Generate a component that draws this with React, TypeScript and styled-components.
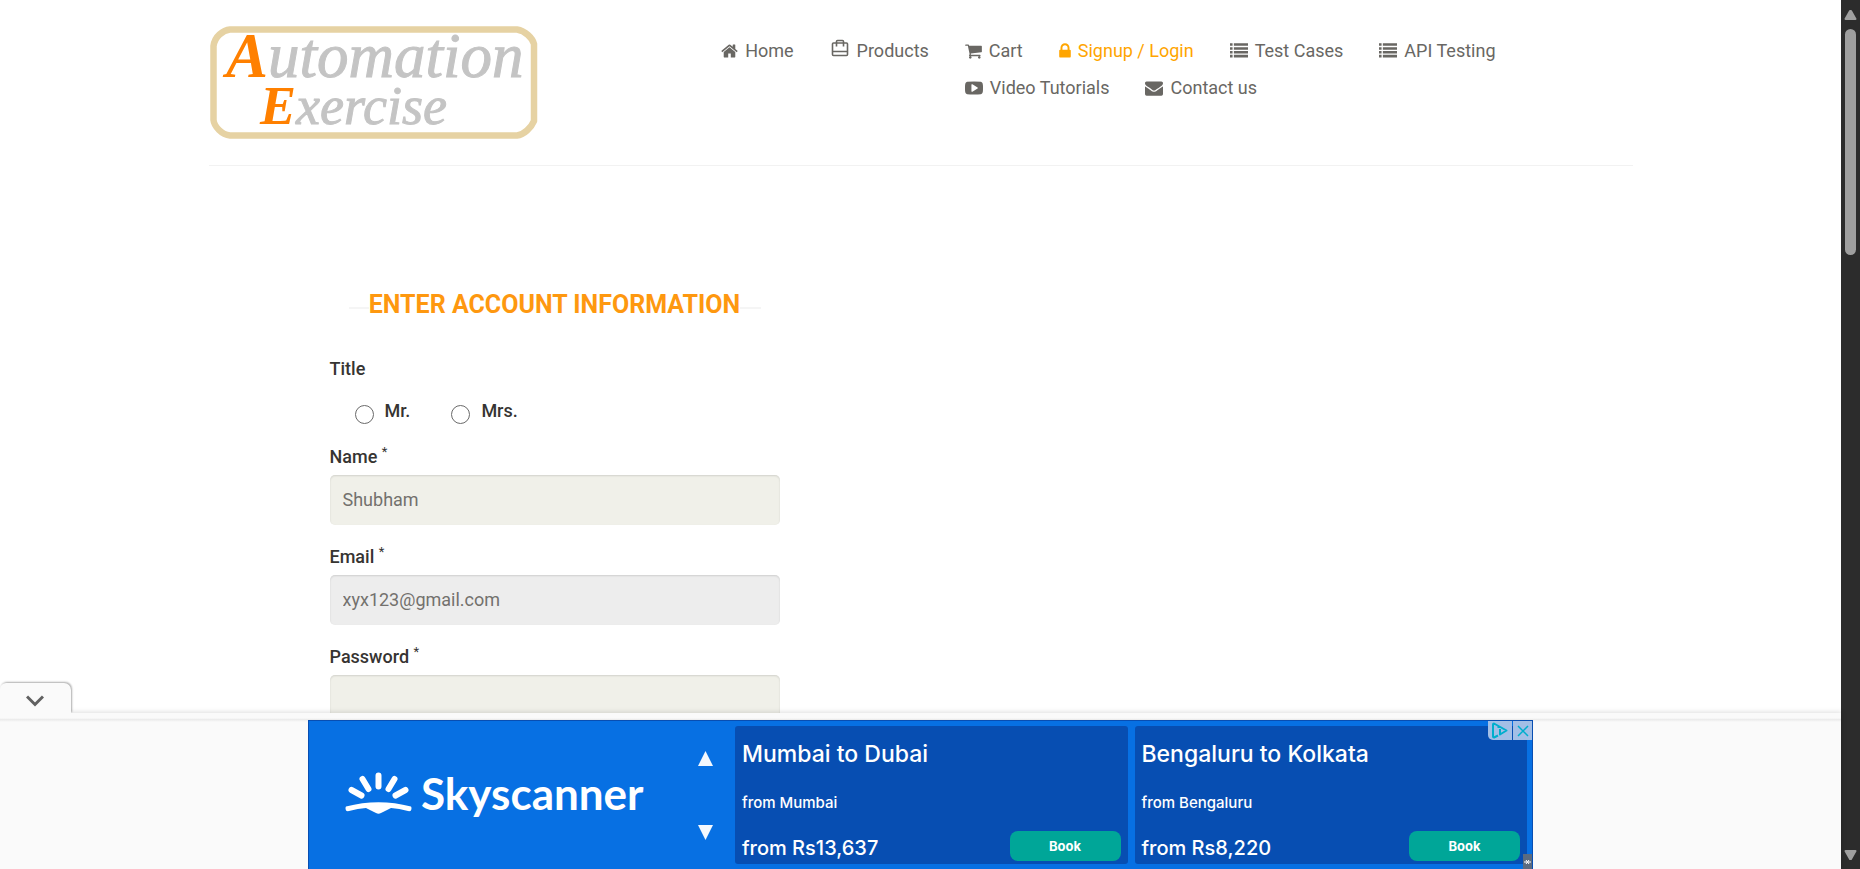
import React from "react";
import styled, { createGlobalStyle, css } from "styled-components";

const GlobalStyle = createGlobalStyle`
  *, *::before, *::after { box-sizing: border-box; }
  body {
    margin: 0;
    background: #fff;
    color: #363432;
    font-family: Roboto, "Liberation Sans", sans-serif;
    font-size: 18px;
    line-height: 25px;
  }
`;

/* ---------- window shell ---------- */

const Shell = styled.div`
  display: grid;
  grid-template-columns: minmax(0, 1fr) 19px;
  height: 100vh;
  overflow: hidden;
`;

const Page = styled.div`
  display: flex;
  flex-direction: column;
  min-height: 0;
`;

const Content = styled.div`
  flex: 1;
  min-height: 0;
  overflow: hidden;
`;

const ScrollRail = styled.div`
  display: flex;
  flex-direction: column;
  align-items: center;
  padding: 10px 0 9px;
  background: #2c2c2c;
`;

const ScrollThumb = styled.div`
  width: 11px;
  height: 26vh;
  margin: 9px 0 auto;
  border-radius: 6px;
  background: #9f9f9f;
`;

/* ---------- header ---------- */

const Container = styled.div`
  max-width: 1462px;
  margin: 0 auto;
  padding: 0 19px;
`;

const Header = styled.header`
  display: grid;
  grid-template-columns: 1fr 2fr;
  padding: 26px 0;
  border-bottom: 1px solid #f2f2f2;
`;

const LogoLink = styled.a`
  display: block;
  padding-left: 1px;
  svg { display: block; overflow: visible; }
`;

const Nav = styled.nav`
  display: flex;
  align-items: flex-start;
  gap: 36px;
  padding: 12px 0 0 38px;
`;

const NavRows = styled.div`
  display: flex;
  flex-direction: column;
  gap: 12px;
`;

const NavRow = styled.div`
  display: flex;
  gap: 36px;
`;

const NavLink = styled.a<{ $active?: boolean }>`
  display: flex;
  align-items: center;
  gap: 7px;
  color: ${(p) => (p.$active ? "#ffa500" : "#696763")};
  font-size: 18px;
  line-height: 25px;
  white-space: nowrap;
  text-decoration: none;
  svg { flex: none; fill: currentColor; }
`;

/* ---------- form ---------- */

const Form = styled.form`
  max-width: 450px;
  margin: 124px 0 0 121px;
`;

const Heading = styled.h2`
  display: flex;
  align-items: center;
  justify-content: center;
  margin: 0 19px 36px;
  color: #fe980f;
  font-size: 25px;
  line-height: 30px;
  font-weight: 700;
  text-transform: uppercase;
  white-space: nowrap;
  &::before, &::after {
    content: "";
    flex: 1;
    height: 2px;
    margin-top: 6px;
    background: #f5f5f5;
  }
`;

const TitleGroup = styled.fieldset`
  margin: 0 0 20px;
  padding: 0;
  border: 0;
`;

const labelText = css`
  font-size: 18px;
  line-height: 25px;
  font-weight: 500;
`;

const Legend = styled.legend`
  ${labelText}
  padding: 0;
  margin-bottom: 17px;
`;

const Radios = styled.div`
  display: flex;
  gap: 41px;
  padding-left: 25px;
`;

const RadioLabel = styled.label`
  ${labelText}
  display: flex;
  align-items: flex-start;
  gap: 11px;
`;

const Radio = styled.input`
  appearance: none;
  width: 19px;
  height: 19px;
  margin: 7px 0 0;
  border: 1px solid #6a6a6a;
  border-radius: 50%;
  background: #fff;
  &:checked { box-shadow: inset 0 0 0 4px #fff; background: #0075ff; }
`;

const Field = styled.div`
  display: flex;
  flex-direction: column;
  gap: 6px;
  margin-bottom: 19px;
`;

const Label = styled.label`
  ${labelText}
  sup {
    font-size: 13px;
    line-height: 0;
    font-weight: 400;
  }
`;

const Input = styled.input`
  width: 100%;
  height: 50px;
  padding: 0 13px 2px;
  border: 0;
  border-radius: 5px;
  background: #f0f0e9;
  box-shadow: inset 0 1px 2px rgba(0, 0, 0, 0.13);
  color: #73716d;
  font: inherit;
  &:disabled { background: #ededed; }
`;

/* ---------- anchored ad ---------- */

const Anchor = styled.aside`
  position: relative;
  padding-top: 7px;
  background: #fafafa;
  box-shadow: 0 0 5px 1px rgba(0, 0, 0, 0.13);
`;

const AnchorEdge = styled.div`
  position: absolute;
  top: 5px;
  left: 0;
  right: 0;
  height: 4px;
  background: linear-gradient(#fafafa, #ebebeb 40%, #fafafa);
`;

const CollapseTab = styled.button`
  position: absolute;
  left: 0;
  bottom: 100%;
  display: flex;
  align-items: center;
  justify-content: center;
  width: 71px;
  height: 30px;
  margin: 0;
  padding: 5px 1px 0 0;
  border: 0;
  border-radius: 6px 7px 0 0;
  background: #fafafa;
  box-shadow: 1px -1px 2px rgba(0, 0, 0, 0.32);
  clip-path: inset(-6px -8px 0 0);
`;

const Banner = styled.div`
  position: relative;
  display: grid;
  grid-template-columns: 426px minmax(0, 1fr);
  max-width: 1225px;
  height: 149px;
  margin: 0 auto;
  padding: 5px 5px 5px 0;
  border: 1px solid #084eb2;
  border-bottom: 0;
  background: #0770e3;
  color: #fff;
  font-family: Inter, sans-serif;
`;

const Brand = styled.div`
  display: flex;
  align-items: center;
  justify-content: space-between;
  padding: 0 22px 0 36px;
`;

const BrandName = styled.a`
  display: flex;
  align-items: center;
  gap: 9px;
  padding-bottom: 5px;
  color: #fff;
  font-family: Lato, sans-serif;
  font-size: 44px;
  line-height: 50px;
  font-weight: 700;
  text-decoration: none;
`;

const Arrows = styled.div`
  display: flex;
  flex-direction: column;
  gap: 59px;
`;

const ArrowButton = styled.button`
  display: block;
  width: 15px;
  height: 15px;
  padding: 0;
  border: 0;
  background: none;
  svg { display: block; }
`;

const Deals = styled.div`
  display: grid;
  grid-template-columns: 1fr 1fr;
  gap: 7px;
`;

const Deal = styled.section`
  display: flex;
  flex-direction: column;
  justify-content: space-between;
  height: 138px;
  padding: 13px 7px 3px;
  border-radius: 3px;
  background: #074eb2;
`;

const DealTitle = styled.h3`
  margin: 0;
  font-size: 23px;
  line-height: 30px;
  font-weight: 500;
`;

const DealFrom = styled.p`
  margin: 6px 0 0;
  font-size: 15px;
  line-height: 20px;
  font-weight: 500;
`;

const DealFoot = styled.div`
  display: flex;
  align-items: flex-end;
  justify-content: space-between;
`;

const Price = styled.span`
  font-size: 20px;
  line-height: 25px;
  font-weight: 500;
`;

const Book = styled.button`
  width: 111px;
  height: 30px;
  padding: 0;
  border: 0;
  border-radius: 8px;
  background: #00a698;
  color: #fff;
  font: 700 13px/20px Inter, sans-serif;
`;

const AdChoices = styled.div`
  position: absolute;
  top: 0;
  right: 0;
  display: flex;
  gap: 1px;
`;

const ChoiceButton = styled.button<{ $wide?: boolean }>`
  display: flex;
  align-items: center;
  justify-content: center;
  width: ${(p) => (p.$wide ? 24 : 19)}px;
  height: 19px;
  padding: 0;
  border: 0;
  border-bottom-left-radius: ${(p) => (p.$wide ? 5 : 0)}px;
  background: #a3bfe6;
`;

const CornerMark = styled.div`
  position: absolute;
  right: 0;
  bottom: 0;
  display: flex;
  align-items: center;
  justify-content: center;
  width: 9px;
  height: 15px;
  background: #5b6b80;
`;

/* ---------- drawings ---------- */

const icons = {
  home: {
    left: 64,
    units: 1664,
    width: 17,
    d: "M1472 992v480q0 26-19 45t-45 19h-384v-384h-256v384h-384q-26 0-45-19t-19-45v-480q0-1 .5-3t.5-3l575-474 575 474q1 2 1 6zm223-69l-62 74q-8 9-21 11h-3q-13 0-21-7l-692-577-692 577q-12 8-24 7-13-2-21-11l-62-74q-8-10-7-23.5t11-21.5l719-599q32-26 76-26t76 26l244 204v-195q0-14 9-23t23-9h192q14 0 23 9t9 23v408l219 182q10 8 11 21.5t-7 23.5z",
  },
  cart: {
    left: 64,
    units: 1664,
    width: 17,
    d: "M704 1536q0 52-38 90t-90 38-90-38-38-90 38-90 90-38 90 38 38 90zm896 0q0 52-38 90t-90 38-90-38-38-90 38-90 90-38 90 38 38 90zm128-1088v512q0 24-16.5 42.5t-40.5 21.5l-1044 122q13 60 13 70 0 16-24 64h920q26 0 45 19t19 45-19 45-45 19h-1024q-26 0-45-19t-19-45q0-11 8-31.5t16-36 21.5-40 15.5-29.5l-177-823h-204q-26 0-45-19t-19-45 19-45 45-19h256q16 0 28.5 6.5t19.5 15.5 13 24.5 8 26 5.5 29.5 4.5 26h1201q26 0 45 19t19 45z",
  },
  lock: {
    left: 320,
    units: 1152,
    width: 12,
    d: "M640 768h512v-192q0-106-75-181t-181-75-181 75-75 181v192zm832 96v576q0 40-28 68t-68 28h-960q-40 0-68-28t-28-68v-576q0-40 28-68t68-28h32v-192q0-184 132-316t316-132 316 132 132 316v192h32q40 0 68 28t28 68z",
  },
  list: {
    left: 0,
    units: 1792,
    width: 18,
    d: "M0 128h256v256H0zM384 128h1408v256H384zM0 512h256v256H0zM384 512h1408v256H384zM0 896h256v256H0zM384 896h1408v256H384zM0 1280h256v256H0zM384 1280h1408v256H384z",
  },
  video: {
    left: 0,
    units: 1792,
    width: 18,
    d: "M1280 896q0-37-30-54l-512-320q-31-20-65-2-33 18-33 56v640q0 38 33 56 16 8 31 8 20 0 34-10l512-320q30-17 30-54zm512 0q0 96-1 150t-8.5 136.5-22.5 147.5q-16 73-69 123t-124 58q-222 25-671 25t-671-25q-71-8-124.5-58t-69.5-123q-14-65-21.5-147.5t-8.5-136.5-1-150 1-150 8.5-136.5 22.5-147.5q16-73 69-123t124-58q222-25 671-25t671 25q71 8 124.5 58t69.5 123q14 65 21.5 147.5t8.5 136.5 1 150z",
  },
  envelope: {
    left: 0,
    units: 1792,
    width: 18,
    d: "M1792 710v794q0 66-47 113t-113 47h-1472q-66 0-113-47t-47-113v-794q44 49 101 87 362 246 497 345 57 42 92.5 65.5t94.5 48 110 24.5h2q51 0 110-24.5t94.5-48 92.5-65.5q170-123 498-345 57-39 100-87zm0-294q0 79-49 151t-122 123q-376 261-468 325-10 7-42.5 31t-54 38.5-52 32.5-57.5 27-50 9h-2q-23 0-50-9t-57.5-27-52-32.5-54-38.5-42.5-31q-91-64-262-182.5t-205-142.5q-62-42-117-115.5t-55-136.5q0-78 41.5-130t118.5-52h1472q65 0 112.5 47t47.5 113z",
  },
};

function Icon({ name }: { name: keyof typeof icons }) {
  const icon = icons[name];
  return (
    <svg width={icon.width} height="18" viewBox={`${icon.left} 0 ${icon.units} 1792`} aria-hidden="true">
      <path d={icon.d} />
    </svg>
  );
}

function TravelIcon() {
  return (
    <svg width="20" height="25" viewBox="0 0 20 25" aria-hidden="true">
      <path
        d="M3.500 5H16.500Q17.500 5 17.500 6V16.500Q17.500 17.500 16.500 17.500H3.500Q2.500 17.500 2.500 16.500V6Q2.500 5 3.500 5ZM2.500 13.500H17.500M6.500 8.500V3.500Q6.500 2.500 7.500 2.500H12.500Q13.500 2.500 13.500 3.500V8.500"
        fill="none"
        stroke="currentColor"
        strokeWidth="1.600"
      />
    </svg>
  );
}

function Logo() {
  return (
    <svg width="328" height="113" viewBox="0 0 328 113" role="img" aria-label="Automation Exercise">
      <path
        d="M20 3.500H307Q313 4.500 318 9T324 18V95Q322 100 317 104.500T307 109.500H20Q14 109 9 104T3.500 94V20Q4.500 13 9.500 8.500T20 3.500Z"
        fill="#fff"
        stroke="#e6d2a3"
        strokeWidth="6.500"
        strokeLinejoin="round"
      />
      <g fontFamily="'Liberation Serif', serif" fontStyle="italic" fill="#c4c4c4" stroke="#c4c4c4" strokeWidth="1">
        <text x="16" y="51" fontSize="63">
          <tspan fill="#ff8000" stroke="none" fontWeight="700">A</tspan>utomation
        </text>
        <text x="50" y="98" fontSize="54">
          <tspan fill="#ff8000" stroke="none" fontWeight="700">E</tspan>xercise
        </text>
      </g>
    </svg>
  );
}

function SunMark() {
  return (
    <svg width="67" height="42" viewBox="0 0 67 42" aria-hidden="true">
      <g stroke="#fff" strokeWidth="6" strokeLinecap="round">
        <path d="M33.500 3.500V14.500M17.500 7L23.500 17M49.500 7L43.500 17M6.500 18L16.500 23.500M60.500 18L50.500 23.500" />
      </g>
      <path
        d="M1 34.500Q33.500 26 66 34.500Q67 36 66 38.500Q65 39.500 63 39Q54 36.500 46 36L36 41Q33.500 42.500 31 41L21 36Q13 36.500 4 39Q2 39.500 1 38.500Q0 36 1 34.500Z"
        fill="#fff"
      />
    </svg>
  );
}

function Triangle({ down }: { down?: boolean }) {
  return (
    <svg width="15" height="15" viewBox="0 0 15 15" aria-hidden="true">
      <path d={down ? "M0 0H15L7.500 15Z" : "M0 15H15L7.500 0Z"} fill="#f3f8fe" />
    </svg>
  );
}

function RailArrow({ down }: { down?: boolean }) {
  return (
    <svg width="13" height="10" viewBox="0 0 13 10" aria-hidden="true">
      <path
        d={down ? "M1.500 1H11.500L7 9H6Z" : "M1.500 9H11.500L7 1H6Z"}
        fill="#9f9f9f"
        stroke="#9f9f9f"
        strokeWidth="2"
        strokeLinejoin="round"
      />
    </svg>
  );
}

/* ---------- content ---------- */

const fields = [
  { id: "name", label: "Name", type: "text", value: "Shubham", disabled: false },
  { id: "email", label: "Email", type: "email", value: "xyx123@gmail.com", disabled: true },
  { id: "password", label: "Password", type: "password", value: "", disabled: false },
];

const deals = [
  { route: "Mumbai to Dubai", from: "from Mumbai", price: "from Rs13,637" },
  { route: "Bengaluru to Kolkata", from: "from Bengaluru", price: "from Rs8,220" },
];

export default function App() {
  return (
    <>
      <GlobalStyle />
      <Shell>
        <Page>
          <Content>
            <Container>
              <Header>
                <LogoLink href="#home"><Logo /></LogoLink>
                <Nav>
                  <NavLink href="#home"><Icon name="home" />Home</NavLink>
                  <NavLink href="#products"><TravelIcon />Products</NavLink>
                  <NavRows>
                    <NavRow>
                      <NavLink href="#cart"><Icon name="cart" />Cart</NavLink>
                      <NavLink href="#login" $active><Icon name="lock" />Signup / Login</NavLink>
                      <NavLink href="#tests"><Icon name="list" />Test Cases</NavLink>
                      <NavLink href="#api"><Icon name="list" />API Testing</NavLink>
                    </NavRow>
                    <NavRow>
                      <NavLink href="#videos"><Icon name="video" />Video Tutorials</NavLink>
                      <NavLink href="#contact"><Icon name="envelope" />Contact us</NavLink>
                    </NavRow>
                  </NavRows>
                </Nav>
              </Header>

              <Form>
                <Heading>Enter Account Information</Heading>
                <TitleGroup>
                  <Legend>Title</Legend>
                  <Radios>
                    <RadioLabel><Radio type="radio" name="title" value="Mr" />Mr.</RadioLabel>
                    <RadioLabel><Radio type="radio" name="title" value="Mrs" />Mrs.</RadioLabel>
                  </Radios>
                </TitleGroup>
                {fields.map((f) => (
                  <Field key={f.id}>
                    <Label htmlFor={f.id}>{f.label} <sup>*</sup></Label>
                    <Input id={f.id} type={f.type} defaultValue={f.value} disabled={f.disabled} />
                  </Field>
                ))}
              </Form>
            </Container>
          </Content>

          <Anchor>
            <CollapseTab type="button" aria-label="Collapse ad">
              <svg width="18" height="12" viewBox="0 0 18 12" fill="none" stroke="#616161" strokeWidth="3">
                <path d="M1 1.500L9 9.500L17 1.500" />
              </svg>
            </CollapseTab>
            <AnchorEdge />
            <Banner>
              <Brand>
                <BrandName href="#skyscanner"><SunMark />Skyscanner</BrandName>
                <Arrows>
                  <ArrowButton type="button" aria-label="Previous"><Triangle /></ArrowButton>
                  <ArrowButton type="button" aria-label="Next"><Triangle down /></ArrowButton>
                </Arrows>
              </Brand>
              <Deals>
                {deals.map((d) => (
                  <Deal key={d.route}>
                    <DealTitle>{d.route}</DealTitle>
                    <DealFrom>{d.from}</DealFrom>
                    <DealFoot>
                      <Price>{d.price}</Price>
                      <Book type="button">Book</Book>
                    </DealFoot>
                  </Deal>
                ))}
              </Deals>
              <AdChoices>
                <ChoiceButton $wide type="button" aria-label="Ad choices">
                  <svg width="16" height="17" viewBox="0 0 16 17" fill="none" stroke="#00aecd" strokeWidth="2">
                    <path d="M6 13.500L2 15.500Q1 15.500 1 14.500V2.500Q1 1.500 2 1.500L14.500 8.500L8 12.500V7M6.500 4V6" strokeLinejoin="round" />
                  </svg>
                </ChoiceButton>
                <ChoiceButton type="button" aria-label="Close ad">
                  <svg width="12" height="12" viewBox="0 0 12 12" stroke="#00aecd" strokeWidth="1.500">
                    <path d="M1 1L11 11M11 1L1 11" />
                  </svg>
                </ChoiceButton>
              </AdChoices>
              <CornerMark>
                <svg width="7" height="6" viewBox="0 0 7 6" stroke="#fff" strokeWidth="1">
                  <path d="M0 3H7M2 1L5 5M5 1L2 5" />
                </svg>
              </CornerMark>
            </Banner>
          </Anchor>
        </Page>
        <ScrollRail aria-hidden="true">
          <RailArrow />
          <ScrollThumb />
          <RailArrow down />
        </ScrollRail>
      </Shell>
    </>
  );
}
